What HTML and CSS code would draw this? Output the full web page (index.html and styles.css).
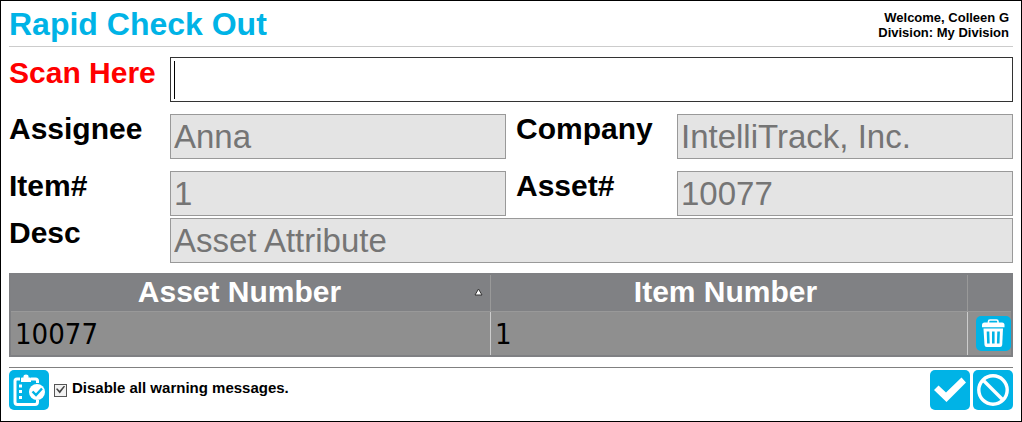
FILE: index.html
```html
<!DOCTYPE html>
<html lang="en">
<head>
    <meta charset="UTF-8">
    <meta name="viewport" content="width=device-width, initial-scale=1.0">
    <title>Rapid Check Out</title>
    <link rel="stylesheet" href="styles.css">
</head>
<body>
    <form class="page">
        <header class="header">
            <h1>Rapid Check Out</h1>
            <div class="user">
                <div>Welcome, Colleen G</div>
                <div>Division: My Division</div>
            </div>
        </header>

        <div class="fields">
            <div class="field wide scan">
                <label for="scan">Scan Here</label>
                <input type="text" id="scan" name="scan" autocomplete="off">
            </div>
            <div class="field">
                <label for="assignee">Assignee</label>
                <input type="text" id="assignee" value="Anna" disabled>
            </div>
            <div class="field">
                <label for="company">Company</label>
                <input type="text" id="company" value="IntelliTrack, Inc." disabled>
            </div>
            <div class="field">
                <label for="item">Item#</label>
                <input type="text" id="item" value="1" disabled>
            </div>
            <div class="field">
                <label for="asset">Asset#</label>
                <input type="text" id="asset" value="10077" disabled>
            </div>
        </div>
        <div class="field desc">
            <label for="desc">Desc</label>
            <input type="text" id="desc" value="Asset Attribute" disabled>
        </div>

        <table class="grid">
            <colgroup>
                <col class="col-asset">
                <col>
                <col class="col-action">
            </colgroup>
            <thead>
                <tr>
                    <th>
                        <div class="heading">
                            <span>Asset Number</span>
                            <svg class="sort" width="9" height="8" viewBox="0 0 9 8"><path d="M4.5 1L8 7H1Z" fill="#fff" stroke="#333" stroke-width="1"/></svg>
                        </div>
                    </th>
                    <th><div class="heading"><span>Item Number</span></div></th>
                    <th></th>
                </tr>
            </thead>
            <tbody>
                <tr>
                    <td>10077</td>
                    <td>1</td>
                    <td class="action">
                        <button type="button" class="icon-button small" aria-label="Delete">
                            <svg viewBox="0 0 35 35" fill="none" stroke="#fff">
                                <path d="M12.5 7V5.4Q12.5 4 14 4H20.5Q22 4 22 5.4V7" stroke-width="1.6"/>
                                <path d="M6 11.2V9Q6 6.5 8.5 6.5H26Q28.5 6.500 28.5 9V11.2Z" fill="#fff" stroke="none"/>
                                <path d="M7.5 12.5H27L26.200 29Q26 31 24 31H10.700Q8.700 31 8.500 29Z" fill="#fff" stroke="none"/>
                                <path d="M12 15.500L12.400 27.500M17.300 15.500V27.500M22.600 15.500L22.200 27.500" stroke="#00b3e6" stroke-width="2.600"/>
                            </svg>
                        </button>
                    </td>
                </tr>
            </tbody>
        </table>

        <footer class="footer">
            <button type="button" class="icon-button" aria-label="Checked out items">
                <svg viewBox="0 0 40 40" fill="none" stroke="#fff">
                    <path d="M11 9H8Q6 9 6 11V32Q6 34.5 8.5 34.5H26Q28.5 34.5 28.5 32V30M22 9H26.5Q28.5 9 28.5 11V13" stroke-width="3"/>
                    <path d="M12 12V8.5Q12 7.5 13 7.5H14.5V6Q14.5 4.5 17 4.5T19.5 6V7.5H21Q22 7.5 22 8.5V12Z" fill="#fff" stroke="none"/>
                    <path d="M10 16H13M10 21.5H13M10 27.5H13" stroke-width="3"/>
                    <circle cx="28" cy="22" r="8" fill="#fff" stroke="none"/>
                    <path d="M23.5 21.5L27 25L33 18.5" stroke="#00b3e6" stroke-width="2.4"/>
                </svg>
            </button>
            <label class="warnings">
                <input type="checkbox" checked>
                <span>Disable all warning messages.</span>
            </label>
            <button type="submit" class="icon-button" aria-label="Accept">
                <svg viewBox="0 0 40 40"><path d="M4 20L8.500 15.500L16 22.500L31.500 7.500L36 12.500L16.500 32Z" fill="#fff"/></svg>
            </button>
            <button type="reset" class="icon-button" aria-label="Cancel">
                <svg viewBox="0 0 40 40" fill="none" stroke="#fff" stroke-width="3.4">
                    <circle cx="20" cy="20" r="14.2"/>
                    <path d="M10 10L30 30"/>
                </svg>
            </button>
        </footer>
    </form>
</body>
</html>
```

FILE: styles.css
```css
* {
    box-sizing: border-box;
}
body {
    margin: 0;
    font-family: "Liberation Sans", Arial, sans-serif;
    color: #000;
    background: #fff;
}
.page {
    min-height: 100vh;
    padding: 8px;
    border: 1px solid #000;
}
.header {
    display: flex;
    justify-content: space-between;
    padding-bottom: 6px;
    border-bottom: 1px solid #ccc;
}
h1 {
    margin: 0;
    font-size: 32px;
    line-height: 30px;
    color: #00b3e6;
}
.user {
    padding: 1px 4px 0 0;
    font-size: 13px;
    font-weight: bold;
    line-height: 15px;
    text-align: right;
}

/* form fields */
.fields {
    display: grid;
    grid-template-columns: repeat(2, minmax(0, 1fr));
    gap: 12px 10px;
    margin-top: 10px;
}
.field {
    display: flex;
}
.wide {
    grid-column: 1 / -1;
}
.field label {
    flex: 0 0 161px;
    font-size: 30px;
    font-weight: bold;
    line-height: 30px;
}
.field input {
    flex: 1;
    min-width: 0;
    height: 45px;
    padding: 0 3px;
    border: 1px solid #333;
    border-radius: 0;
    outline: none;
    font-family: inherit;
    font-size: 33px;
    color: #000;
}
.field input:disabled {
    border-color: #999;
    background: #e4e4e4;
    color: #757575;
}
.field.scan label {
    line-height: 32px;
    color: #f00;
}
.scan input {
    background: linear-gradient(#000, #000) 3px 3px / 1px 38px no-repeat #fff;
}
.desc {
    margin-top: 2px;
}

/* table */
.grid {
    width: 100%;
    margin-top: 10px;
    table-layout: fixed;
    border: 2px solid #7f8083;
    border-spacing: 0;
}
.col-asset {
    width: 48%;
}
.col-action {
    width: 43px;
}
.grid th {
    padding: 0 0 2px;
    border-right: 1px solid #999;
    border-bottom: 1px solid #999;
    background: #808184;
    font-size: 30px;
    line-height: 34px;
    color: #fff;
}
.grid td {
    height: 43px;
    padding: 0 4px;
    border-right: 1px solid #ccc;
    background: #8f8f8f;
    font-family: "DejaVu Sans Condensed", Tahoma, sans-serif;
    font-size: 29px;
    line-height: 34px;
}
.grid th:last-child, .grid td:last-child {
    border-right: none;
}
.heading {
    display: flex;
    align-items: center;
    padding-right: 7px;
}
.heading span {
    flex: 1;
}
.sort {
    margin-left: 6px;
}
.grid .action {
    padding: 0;
}

/* buttons */
.icon-button {
    display: block;
    width: 40px;
    height: 40px;
    padding: 0;
    border: none;
    border-radius: 5px;
    background: #00b3e6;
    cursor: pointer;
}
.icon-button svg {
    display: block;
    width: 100%;
    height: 100%;
}
.small {
    width: 35px;
    height: 35px;
    margin-left: auto;
}

.footer {
    display: flex;
    align-items: center;
    gap: 3px;
    margin-top: 10px;
    padding-top: 2px;
    border-top: 1px solid #808080;
}
.warnings {
    display: flex;
    flex: 1;
    align-items: center;
    gap: 5px;
    padding-left: 2px;
    font-size: 15px;
    font-weight: bold;
    line-height: 17px;
}
.warnings span {
    padding-bottom: 6px;
}
.warnings input {
    appearance: none;
    display: grid;
    place-items: center;
    width: 13px;
    height: 13px;
    margin: 0;
    border: 1px solid #555;
    background: #f2f2f2;
}
.warnings input:checked::before {
    content: "";
    width: 9px;
    height: 9px;
    background: #444;
    clip-path: polygon(0 40%, 14% 30%, 40% 58%, 90% 0, 100% 12%, 42% 90%);
}
```
